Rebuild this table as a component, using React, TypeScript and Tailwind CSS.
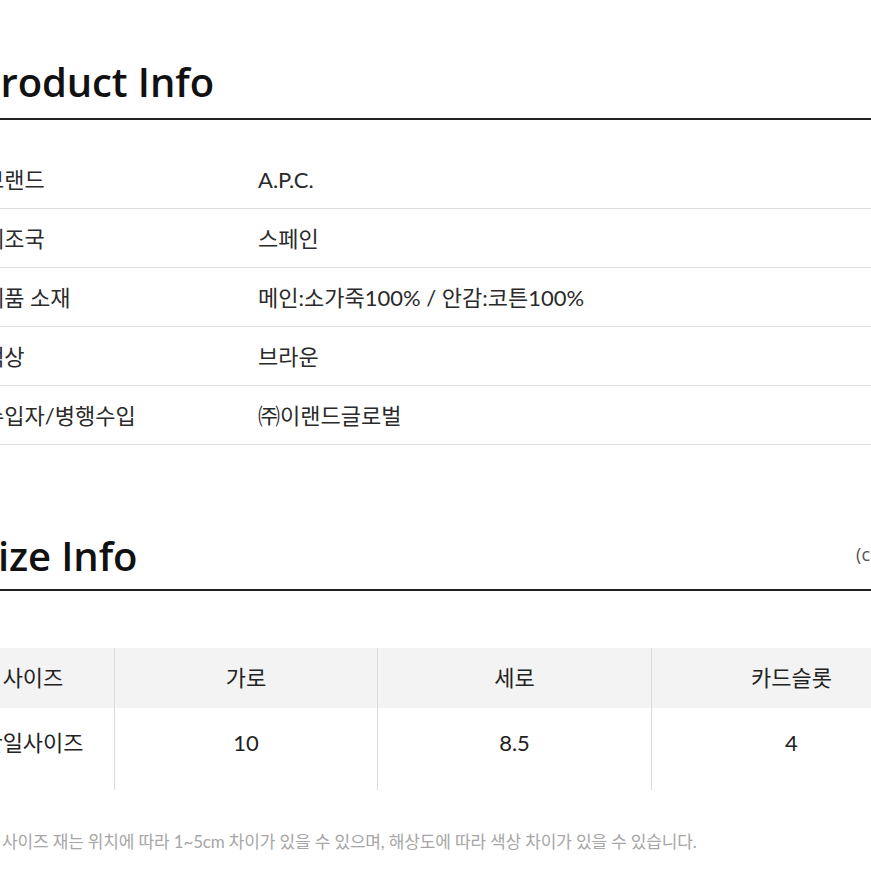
const productRows = [
  { label: "브랜드", value: "A.P.C." },
  { label: "제조국", value: "스페인" },
  { label: "제품 소재", value: "메인:소가죽100% / 안감:코튼100%" },
  { label: "색상", value: "브라운" },
  { label: "수입자/병행수입", value: "㈜이랜드글로벌" },
];

const sizeColumns = [
  { head: "사이즈", value: "단일사이즈", width: "w-[162px]" },
  { head: "가로", value: "10", width: "w-[263px]" },
  { head: "세로", value: "8.5", width: "w-[274px]" },
  { head: "카드슬롯", value: "4", width: "w-[280px]" },
];

function SectionTitle({ title, unit }: { title: string; unit?: string }) {
  return (
    <div className="flex items-end justify-between border-b-2 border-[#222] font-['Open_Sans',sans-serif]">
      <h2 className="text-[40px] font-semibold leading-[46px] tracking-[-0.1px] text-[#111]">
        {title}
      </h2>
      {unit ? (
        <span className="mb-[14px] text-[18px] leading-[22px] text-[#555]">{unit}</span>
      ) : null}
    </div>
  );
}

export default function App() {
  return (
    <div className="h-[871px] w-[871px] overflow-hidden bg-white font-['Lato','Noto_Sans_CJK_KR',sans-serif] text-[#333]">
      <div className="ml-[-24px] w-[916px] pt-[59px]">
        <div className="[&>div]:pb-[13px]">
          <SectionTitle title="Product Info" />
        </div>

        <div className="mt-[30px]">
          {productRows.map((row) => (
            <div
              key={row.label}
              className="flex h-[59px] items-center border-b border-[#dedede] pt-[2px] text-[22px] leading-[30px] text-[#2a2a2a]"
            >
              <div className="w-[282px] shrink-0 pl-[8px]">{row.label}</div>
              <div className="flex-1">{row.value}</div>
            </div>
          ))}
        </div>

        <div className="mt-[88px] [&>div]:pb-[10px]">
          <SectionTitle title="Size Info" unit="(cm)" />
        </div>

        <div className="ml-[-24px] mt-[57px] flex text-[22px] leading-[30px]">
          {sizeColumns.map((col, i) => (
            <div
              key={col.head}
              className={`${col.width} flex shrink-0 flex-col ${i > 0 ? "border-l border-[#dcdcdc]" : ""}`}
            >
              <div className="flex h-[60px] items-center justify-center bg-[#f3f3f3] text-[#222]">
                {col.head}
              </div>
              <div className="flex h-[82px] justify-center pt-[20px] text-[#222]">
                {col.value}
              </div>
            </div>
          ))}
        </div>

        <p className="ml-[26px] mt-[39px] text-[17px] leading-[26px] tracking-[-0.15px] text-[#a6a6a6]">
          사이즈 재는 위치에 따라 1~5cm 차이가 있을 수 있으며, 해상도에 따라 색상 차이가 있을 수 있습니다.
        </p>
      </div>
    </div>
  );
}
